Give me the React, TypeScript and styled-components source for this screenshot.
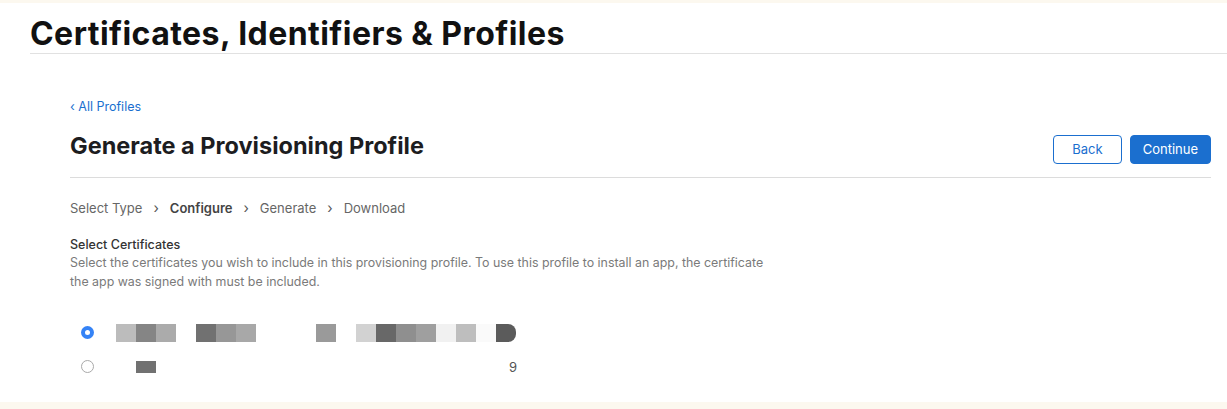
import styled, { createGlobalStyle } from "styled-components";

const GlobalStyle = createGlobalStyle`
  body {
    margin: 0;
    background: #fff;
    font-family: Inter, "Liberation Sans", sans-serif;
    color: #1d1d1f;
  }
`;

const Page = styled.div`
  display: flex;
  flex-direction: column;
  height: 409px;
  border-top: 3px solid #fcf8ef;
  box-sizing: border-box;
`;

const Header = styled.header`
  margin-left: 30px;
  height: 51px;
  border-bottom: 1px solid #e1e1e1;
  display: flex;
  align-items: center;
  padding-top: 10px;
  box-sizing: border-box;
`;

const SiteTitle = styled.h1`
  margin: 0;
  font-size: 32px;
  font-weight: 700;
  letter-spacing: 0.45px;
  color: #111;
`;

const Main = styled.main`
  flex: 1;
  padding: 41px 16px 0 70px;
`;

const BackLink = styled.a`
  display: inline-flex;
  align-items: center;
  gap: 4px;
  font-size: 12.5px;
  color: #1b6fcf;
  text-decoration: none;
  height: 20px;
`;

const TitleRow = styled.div`
  display: flex;
  align-items: center;
  justify-content: space-between;
  height: 42px;
  margin-top: 8px;
  padding-bottom: 10px;
  border-bottom: 1px solid #dcdcdc;
`;

const PageTitle = styled.h2`
  margin: 0;
  font-size: 23.5px;
  font-weight: 700;
  color: #1d1d1f;
`;

const Actions = styled.div`
  display: flex;
  gap: 8px;
  align-self: flex-end;
  margin-bottom: 3px;
`;

const Button = styled.button<{ $primary?: boolean }>`
  height: 29px;
  padding: 0 ${(p) => (p.$primary ? "12px" : "18px")};
  border-radius: 4px;
  font-family: inherit;
  font-size: 13px;
  border: 1px solid #1b6fcf;
  background: ${(p) => (p.$primary ? "#1b6fcf" : "#fff")};
  color: ${(p) => (p.$primary ? "#fff" : "#1b6fcf")};
`;

const Steps = styled.nav`
  display: flex;
  align-items: center;
  gap: 11px;
  margin-top: 20px;
  height: 20px;
  font-size: 13px;
  color: #666;
`;

const Step = styled.span<{ $active?: boolean }>`
  font-weight: ${(p) => (p.$active ? 600 : 400)};
  color: ${(p) => (p.$active ? "#444" : "#666")};
`;

const Chevron = styled.span`
  font-size: 14px;
  color: #555;
`;

const Section = styled.section`
  margin-top: 19px;
`;

const SectionLabel = styled.div`
  font-size: 12.5px;
  font-weight: 500;
  color: #333;
  line-height: 16px;
`;

const Hint = styled.p`
  margin: 0;
  width: 712px;
  font-size: 12.4px;
  line-height: 19px;
  color: #7a7a7a;
`;

const Options = styled.div`
  margin-top: 33px;
  padding-left: 11px;
  display: flex;
  flex-direction: column;
  gap: 16px;
`;

const Option = styled.label`
  display: flex;
  align-items: center;
  gap: 22px;
  height: 18px;
`;

const Radio = styled.span<{ $checked?: boolean }>`
  width: 13px;
  height: 13px;
  border-radius: 50%;
  box-sizing: border-box;
  flex: none;
  background: ${(p) => (p.$checked ? "#3583f6" : "#fff")};
  border: ${(p) => (p.$checked ? "none" : "1px solid #a9a9a9")};
  display: flex;
  align-items: center;
  justify-content: center;

  &::after {
    content: "";
    width: 5px;
    height: 5px;
    border-radius: 50%;
    background: ${(p) => (p.$checked ? "#fff" : "transparent")};
  }
`;

const Mosaic = styled.div`
  display: flex;
  align-items: center;
  height: 18px;
`;

const Cell = styled.span<{ $h: number }>`
  width: 20px;
  height: ${(p) => p.$h}px;
  flex: none;
  &:last-child {
    border-radius: 0 8px 8px 0;
  }
`;

const Tail = styled.span`
  font-size: 13px;
  color: #555;
  margin-left: 11px;
`;

const Footer = styled.footer`
  height: 7px;
  background: #fcf8ef;
`;

const row1: (string | null)[] = [
  "#bcbcbc", "#858585", "#ababab", null,
  "#717171", "#979797", "#a8a8a8", null, null, null,
  "#9a9a9a", null,
  "#d2d2d2", "#686868", "#8f8f8f", "#9f9f9f", "#f1f1f1", "#bebebe", "#fafafa", "#5b5b5b",
];

const row2: (string | null)[] = [
  null, "#717171", null, null, null, null, null, null, null,
  null, null, null, null, null, null, null, null, null,
];

function Pixels({ cells, h }: { cells: (string | null)[]; h: number }) {
  return (
    <Mosaic>
      {cells.map((c, i) => (
        <Cell key={i} $h={h} style={{ background: c ?? "transparent" }} />
      ))}
    </Mosaic>
  );
}

export default function App() {
  return (
    <>
      <GlobalStyle />
      <Page>
        <Header>
          <SiteTitle>Certificates, Identifiers &amp; Profiles</SiteTitle>
        </Header>
        <Main>
          <BackLink href="#">‹ All Profiles</BackLink>
          <TitleRow>
            <PageTitle>Generate a Provisioning Profile</PageTitle>
            <Actions>
              <Button>Back</Button>
              <Button $primary>Continue</Button>
            </Actions>
          </TitleRow>
          <Steps>
            <Step>Select Type</Step>
            <Chevron>›</Chevron>
            <Step $active>Configure</Step>
            <Chevron>›</Chevron>
            <Step>Generate</Step>
            <Chevron>›</Chevron>
            <Step>Download</Step>
          </Steps>
          <Section>
            <SectionLabel>Select Certificates</SectionLabel>
            <Hint>
              Select the certificates you wish to include in this provisioning profile. To use this
              profile to install an app, the certificate the app was signed with must be included.
            </Hint>
          </Section>
          <Options>
            <Option>
              <Radio $checked />
              <Pixels cells={row1} h={18} />
            </Option>
            <Option>
              <Radio />
              <Pixels cells={row2} h={12} />
              <Tail>9</Tail>
            </Option>
          </Options>
        </Main>
        <Footer />
      </Page>
    </>
  );
}
